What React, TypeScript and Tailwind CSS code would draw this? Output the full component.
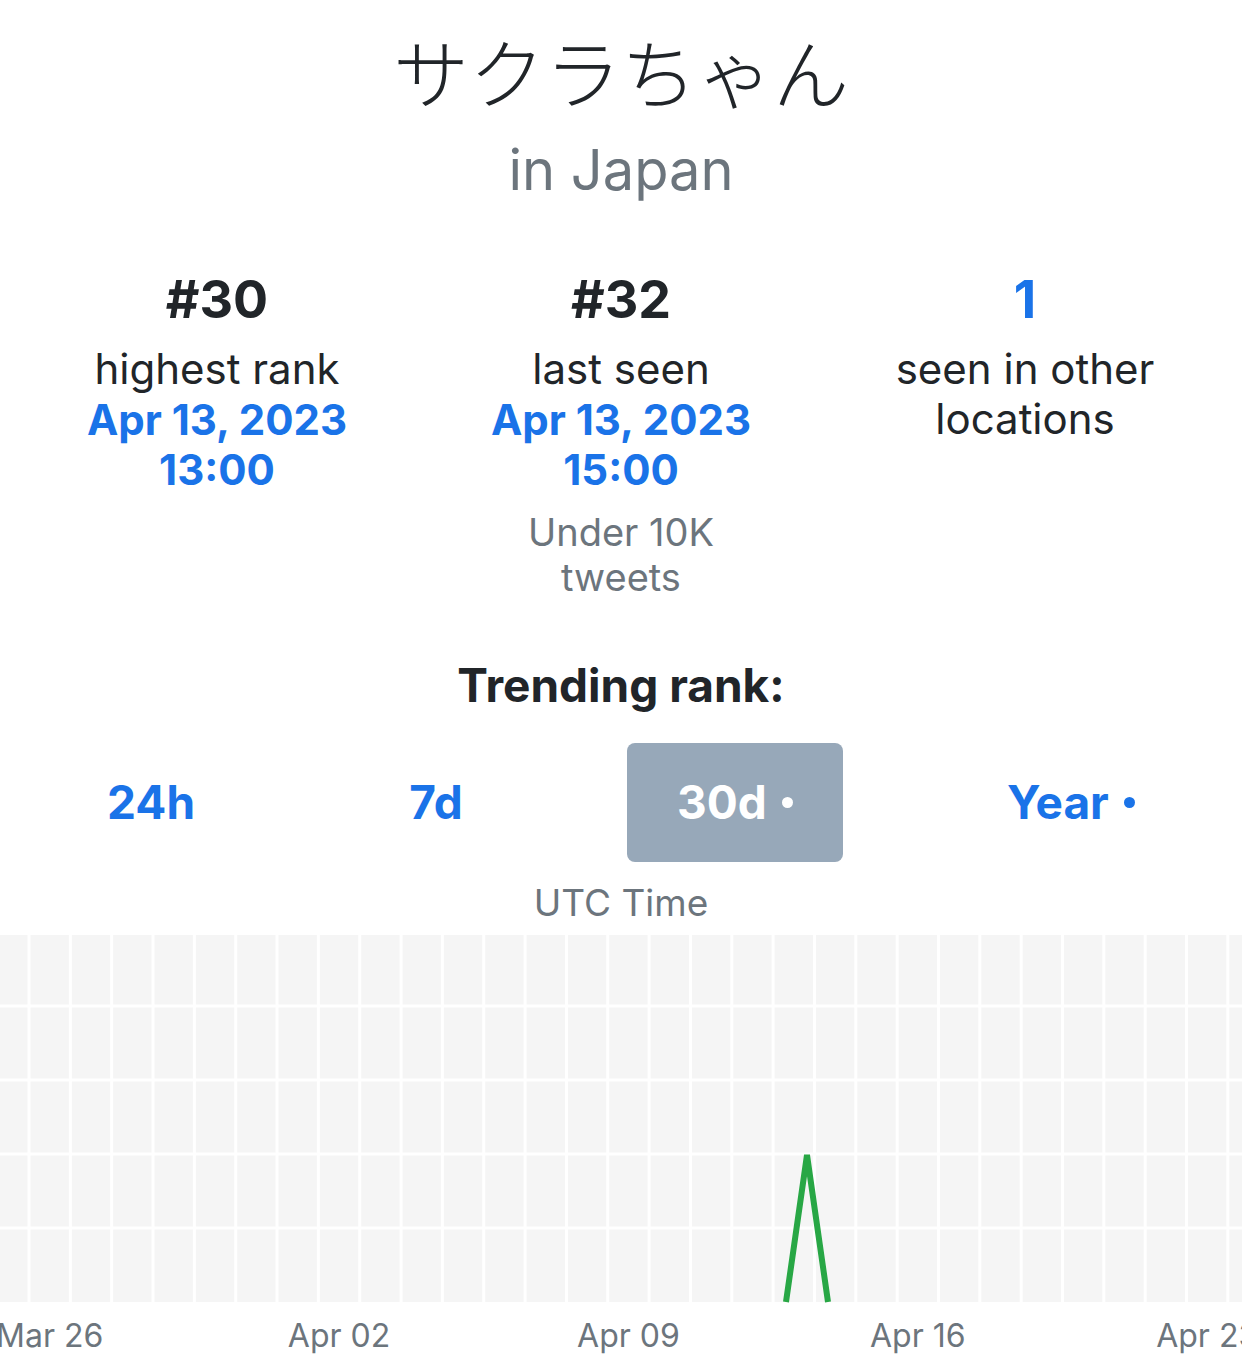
const font = { fontFamily: 'Inter, "Noto Sans CJK JP", "Liberation Sans", sans-serif' };

const stats = [
  { rank: "#30", label: ["highest rank"], date: "Apr 13, 2023", time: "13:00", note: null, rankBlue: false },
  { rank: "#32", label: ["last seen"], date: "Apr 13, 2023", time: "15:00", note: ["Under 10K", "tweets"], rankBlue: false },
  { rank: "1", label: ["seen in other", "locations"], date: null, time: null, note: null, rankBlue: true },
];

const tabs = [
  { name: "24h", dot: false, active: false },
  { name: "7d", dot: false, active: false },
  { name: "30d", dot: true, active: true },
  { name: "Year", dot: true, active: false },
];

const LINE_START = 29;
const STEP = 41.34;
const CHART_H = 367;
const ROWS = [71, 145, 219, 293];
const labels = ["Mar 26", "Apr 02", "Apr 09", "Apr 16", "Apr 23"];

function Chart() {
  const cols = Array.from({ length: 30 }, (_, i) => LINE_START + STEP * i);
  return (
    <svg width="1242" height={CHART_H + 70} viewBox={`0 0 1242 ${CHART_H + 70}`} className="block">
      <rect x="0" y="0" width="1242" height={CHART_H} fill="#f5f5f5" />
      {ROWS.map((y) => (
        <rect key={y} x="0" y={y - 1.5} width="1242" height="3" fill="#ffffff" />
      ))}
      {cols.map((x) => (
        <rect key={x} x={x - 1.5} y="0" width="3" height={CHART_H} fill="#ffffff" />
      ))}
      <polyline
        points={`786,${CHART_H} 807,220 828,${CHART_H}`}
        fill="none"
        stroke="#28a745"
        strokeWidth="6"
      />
      {labels.map((t, i) => (
        <text
          key={t}
          x={LINE_START + STEP * (i * 7 + 0.5)}
          y={CHART_H + 45}
          textAnchor="middle"
          fontSize="32"
          fill="#6c757d"
          style={font}
        >
          {t}
        </text>
      ))}
    </svg>
  );
}

export default function App() {
  return (
    <div className="w-[1242px] h-[1370px] bg-white overflow-hidden text-center text-[#212529]" style={font}>
      <div className="pt-[30px]">
        <h1 className="text-[76px] font-light leading-[1.2]">サクラちゃん</h1>
        <h2 className="mt-[16px] text-[56px] leading-[1.2] text-[#6c757d]">in Japan</h2>
      </div>

      <div className="grid grid-cols-3 px-[15px] mt-[63px]">
        {stats.map((s) => (
          <div key={s.rank} className="flex flex-col items-center">
            <div className={`text-[52px] font-bold leading-[1.25] ${s.rankBlue ? "text-[#1a73e8]" : ""}`}>
              {s.rank}
            </div>
            <div className="mt-[12px] text-[42px] leading-[50px]">
              {s.label.map((l) => (
                <div key={l}>{l}</div>
              ))}
            </div>
            {s.date && (
              <div className="mt-[1px] text-[42px] font-bold leading-[50px] text-[#1a73e8]">
                <div>{s.date}</div>
                <div>{s.time}</div>
              </div>
            )}
            {s.note && (
              <div className="mt-[15px] text-[38px] leading-[45px] text-[#6c757d]">
                {s.note.map((n) => (
                  <div key={n}>{n}</div>
                ))}
              </div>
            )}
          </div>
        ))}
      </div>

      <div className="mt-[57px] text-[46px] font-bold leading-[56px]">Trending rank:</div>

      <div className="mt-[30px] flex justify-around">
        {tabs.map((t) => (
          <button
            key={t.name}
            className={`flex items-center px-[50px] py-[32px] rounded-lg text-[46px] font-bold leading-[55px] ${
              t.active ? "bg-[#97a8b9] text-white" : "text-[#1a73e8]"
            }`}
            style={font}
          >
            {t.name}
            {t.dot && <span className="ml-[15px] inline-block w-[11px] h-[11px] rounded-full bg-current" />}
          </button>
        ))}
      </div>

      <div className="mt-[18px] text-[37px] leading-[45px] text-[#6c757d]">UTC Time</div>

      <div className="mt-[10px]">
        <Chart />
      </div>
    </div>
  );
}
